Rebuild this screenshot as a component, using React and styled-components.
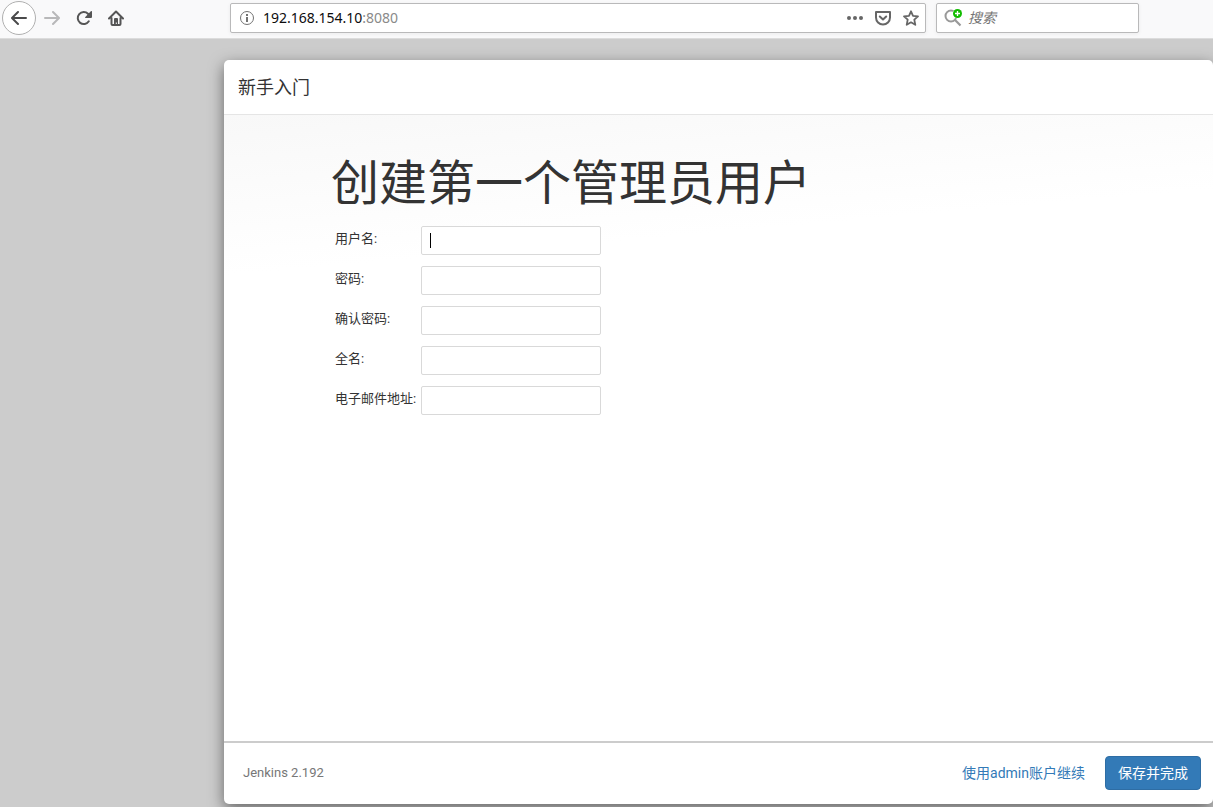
import React from "react";
import styled, { createGlobalStyle } from "styled-components";

const GlobalStyle = createGlobalStyle`
  * {
    box-sizing: border-box;
  }
  body {
    margin: 0;
    background: #ccc;
    color: #333;
    font-family: Roboto, "Noto Sans CJK SC", sans-serif;
    font-size: 13px;
    line-height: 20px;
  }
`;

const Page = styled.div`
  min-height: 100vh;
  display: flex;
  flex-direction: column;
`;

const Toolbar = styled.header`
  display: flex;
  align-items: center;
  height: 39px;
  padding: 0 74px 3px 2px;
  background: #f9f9fa;
  border-bottom: 1px solid #dcdcdc;
`;

const Nav = styled.nav`
  display: flex;
  align-items: center;
  width: 228px;
`;

const IconButton = styled.button`
  display: flex;
  align-items: center;
  justify-content: center;
  width: ${(p) => (p.$round ? "34px" : "32px")};
  height: ${(p) => (p.$round ? "34px" : "32px")};
  padding: 0;
  color: ${(p) => (p.$round ? "#4a4a4b" : "#555")};
  background: ${(p) => (p.$round ? "#fff" : "none")};
  border: ${(p) => (p.$round ? "1px solid #b0b0b0" : "none")};
  border-radius: 50%;
  &:disabled {
    color: #b8b8b9;
  }
`;

const FieldBox = styled.div`
  display: flex;
  align-items: center;
  height: 30px;
  background: #fff;
  border: 1px solid #b9b9ba;
  border-radius: 2px;
  box-shadow: 0 1px 4px rgba(0, 0, 0, 0.06);
  font-family: "Noto Sans", "Noto Sans CJK SC", sans-serif;
`;

const UrlBar = styled(FieldBox)`
  flex: 1;
  gap: 8px;
  padding: 0 6px 0 8px;
`;

const Address = styled.div`
  flex: 1;
  color: #8a8a8a;
  font-size: 14px;
`;

const Host = styled.span`
  color: #0c0c0d;
`;

const PageActions = styled.div`
  display: flex;
  gap: 12px;
`;

const ActionButton = styled.button`
  display: flex;
  padding: 0;
  color: #666;
  background: none;
  border: none;
`;

const SearchBar = styled(FieldBox)`
  width: 203px;
  margin-left: 10px;
  padding: 0 7px;
  gap: 6px;
`;

const SearchInput = styled.input`
  flex: 1;
  min-width: 0;
  padding: 0;
  border: none;
  outline: none;
  background: none;
  font: italic 14px "Noto Sans", "Noto Sans CJK SC", sans-serif;
  &::placeholder {
    color: #757575;
    opacity: 1;
  }
`;

const Backdrop = styled.main`
  flex: 1;
  display: flex;
  padding: 21px 0 3px 224px;
  overflow: hidden;
`;

const Dialog = styled.section`
  flex: 1;
  display: flex;
  flex-direction: column;
  background: #fff;
  border-radius: 5px;
  box-shadow: 0 5px 15px rgba(0, 0, 0, 0.5);
  overflow: hidden;
`;

const DialogHeader = styled.div`
  padding: 15px 15px 14px 14px;
  border-bottom: 1px solid #e5e5e5;
`;

const DialogTitle = styled.h4`
  margin: 0;
  font-size: 18px;
  font-weight: 400;
  line-height: 25px;
`;

const DialogBody = styled.div`
  flex: 1;
  padding: 42px 107px;
  background: linear-gradient(175deg, #f8f8f8 0, #fff 160px);
`;

const Heading = styled.h1`
  margin: 0 0 15px;
  font-size: 48px;
  font-weight: 400;
  line-height: 54px;
`;

const Form = styled.form`
  display: grid;
  gap: 11px;
  padding-left: 4px;
`;

const Row = styled.div`
  display: grid;
  grid-template-columns: 82px 180px;
  gap: 4px;
`;

const Label = styled.label`
  padding-top: 3px;
  white-space: nowrap;
`;

const InputWrap = styled.div`
  position: relative;
  display: flex;
`;

const TextInput = styled.input`
  width: 100%;
  height: 29px;
  padding: 4px 8px;
  border: 1px solid #d9d9d9;
  border-radius: 2px;
  outline: none;
  background: #fff;
  font: inherit;
`;

const Caret = styled.span`
  position: absolute;
  top: 7px;
  left: 9px;
  width: 1px;
  height: 15px;
  background: #000;
`;

const DialogFooter = styled.footer`
  display: flex;
  align-items: center;
  gap: 20px;
  padding: 13px 12px 14px 19px;
  border-top: 2px solid #ccc;
`;

const Version = styled.span`
  flex: 1;
  color: #777;
`;

const SkipLink = styled.a`
  color: #337ab7;
  font-size: 14px;
  text-decoration: none;
`;

const SaveButton = styled.button`
  height: 34px;
  padding: 0 12px;
  color: #fff;
  background: #337ab7;
  border: 1px solid #2e6da4;
  border-radius: 4px;
  font: inherit;
  font-size: 14px;
`;

const fields = [
  { name: "username", label: "用户名:", type: "text", active: true },
  { name: "password1", label: "密码:", type: "password" },
  { name: "password2", label: "确认密码:", type: "password" },
  { name: "fullname", label: "全名:", type: "text" },
  { name: "email", label: "电子邮件地址:", type: "text" },
];

const Icon = ({ children, ...rest }) => (
  <svg width="16" height="16" viewBox="0 0 16 16" fill="currentColor" aria-hidden="true" {...rest}>
    {children}
  </svg>
);

const arrow =
  "M15 7H3.414l4.293-4.293a1 1 0 0 0-1.414-1.414l-6 6a1 1 0 0 0 0 1.414l6 6a1 1 0 0 0 1.414-1.414L3.414 9H15a1 1 0 0 0 0-2z";

function BrowserToolbar() {
  return (
    <Toolbar>
      <Nav>
        <IconButton $round aria-label="后退">
          <Icon><path d={arrow} /></Icon>
        </IconButton>
        <IconButton disabled aria-label="前进">
          <Icon><path d={arrow} transform="matrix(-1 0 0 1 16 0)" /></Icon>
        </IconButton>
        <IconButton aria-label="刷新">
          <Icon>
            <path d="M12.800 11.300A6 6 0 1 1 12 3.800L13.500 5.500" fill="none" stroke="currentColor" strokeWidth="2" strokeLinecap="round" />
            <path d="M15.400 1a.6.6 0 0 1 .6.6V7a1 1 0 0 1-1 1H9.600a.5.5 0 0 1-.3-.9l5.500-5.900a.6.6 0 0 1 .6-.2z" />
          </Icon>
        </IconButton>
        <IconButton aria-label="主页">
          <Icon>
            <path d="M1 8.500L8 1.500l7 7M3.500 8V14a1 1 0 0 0 1 1h7a1 1 0 0 0 1-1V8" fill="none" stroke="currentColor" strokeWidth="2" strokeLinecap="round" strokeLinejoin="round" />
            <path d="M6 15V9a1 1 0 0 1 1-1h2a1 1 0 0 1 1 1v6H8.800v-2.500h-1V15z" />
          </Icon>
        </IconButton>
      </Nav>
      <UrlBar>
        <Icon>
          <circle cx="8" cy="8" r="6.500" fill="none" stroke="#737373" />
          <path d="M7 7h2v5H7zM7 4h2v2H7z" fill="#737373" />
        </Icon>
        <Address><Host>192.168.154.10</Host>:8080</Address>
        <PageActions>
          <ActionButton aria-label="页面操作">
            <Icon>
              <circle cx="2" cy="8" r="2" />
              <circle cx="8" cy="8" r="2" />
              <circle cx="14" cy="8" r="2" />
            </Icon>
          </ActionButton>
          <ActionButton aria-label="保存到 Pocket">
            <Icon fill="none" stroke="currentColor" strokeWidth="2" strokeLinecap="round" strokeLinejoin="round">
              <path d="M1 2h14v5.500a7 7 0 0 1-14 0z" />
              <path d="M4.800 6.500L8 9.500l3.200-3" />
            </Icon>
          </ActionButton>
          <ActionButton aria-label="添加书签">
            <Icon fill="none" stroke="currentColor" strokeWidth="1.800" strokeLinejoin="round">
              <path d="M8 1.300l2 4.500 5 .5-3.700 3.400 1 5.100L8 12.300l-4.300 2.500 1-5.100L1 6.300l5-.5z" />
            </Icon>
          </ActionButton>
        </PageActions>
      </UrlBar>
      <SearchBar>
        <Icon width="18" height="18" viewBox="0 0 18 18">
          <circle cx="7" cy="7" r="5.500" fill="none" stroke="#999" strokeWidth="2" />
          <path d="M10.800 10.800L16.500 16.500" stroke="#999" strokeWidth="2.200" />
          <circle cx="13.500" cy="4.500" r="5" fill="#fff" />
          <circle cx="13.500" cy="4.500" r="4.500" fill="#12bc00" />
          <path d="M11 4.500h5M13.500 2v5" stroke="#fff" strokeWidth="1.300" />
        </Icon>
        <SearchInput aria-label="搜索" placeholder="搜索" />
      </SearchBar>
    </Toolbar>
  );
}

export default function App() {
  return (
    <Page>
      <GlobalStyle />
      <BrowserToolbar />
      <Backdrop>
        <Dialog>
          <DialogHeader>
            <DialogTitle>新手入门</DialogTitle>
          </DialogHeader>
          <DialogBody>
            <Heading>创建第一个管理员用户</Heading>
            <Form id="setup-form">
              {fields.map((field) => (
                <Row key={field.name}>
                  <Label htmlFor={field.name}>{field.label}</Label>
                  <InputWrap>
                    <TextInput id={field.name} name={field.name} type={field.type} />
                    {field.active && <Caret />}
                  </InputWrap>
                </Row>
              ))}
            </Form>
          </DialogBody>
          <DialogFooter>
            <Version>Jenkins 2.192</Version>
            <SkipLink href="#">使用admin账户继续</SkipLink>
            <SaveButton type="submit" form="setup-form">保存并完成</SaveButton>
          </DialogFooter>
        </Dialog>
      </Backdrop>
    </Page>
  );
}
